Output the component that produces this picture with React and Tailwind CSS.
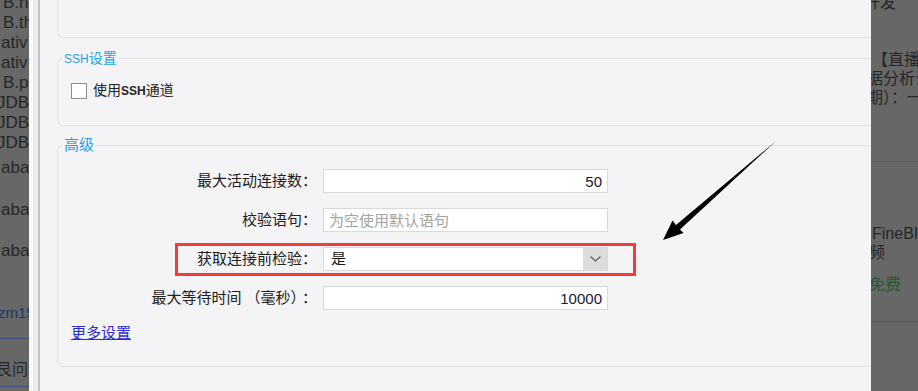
/* eslint-disable */
import React from "react";

const leftLines = [
    { t: "B.ne", cls: "-mt-[7px] ml-[3px]" },
    { t: "B.th", cls: "ml-[3px]" },
    { t: "ativ", cls: "ml-[1px]" },
    { t: "ativ", cls: "ml-[1px]" },
    { t: "B.pr", cls: "ml-[3px]" },
    { t: "JDBC", cls: "-ml-[3px]" },
    { t: "JDBC", cls: "-ml-[3px]" },
    { t: "JDBC", cls: "-ml-[3px]" },
    { t: "aba.c", cls: "mt-[5px] ml-[1px]" },
    { t: "aba.c", cls: "mt-[22px] ml-[1px]" },
    { t: "aba.c", cls: "mt-[21px] ml-[1px]" },
];

function LeftStrip() {
    return (
        <div className="w-[29px] shrink-0 bg-[#676767] text-[#262626] text-[17px] leading-[20px] whitespace-nowrap overflow-hidden">
            {leftLines.map((l, i) => (
                <div key={i} className={l.cls}>
                    {l.t}
                </div>
            ))}
            <div className="mt-[42px] -ml-[2px] text-[15px] text-[#1d3566]">zm15</div>
            <div className="mt-[15px] border-t border-[#33507c]" />
            <div className="mt-[21px] -ml-[4px] text-[16px]">艮问卷</div>
            <div className="mt-[6px] border-t border-[#33507c]" />
        </div>
    );
}

function RightStrip() {
    return (
        <div className="w-[47px] shrink-0 bg-[#676767] text-[#262626] text-[16px] leading-[19px] whitespace-nowrap overflow-hidden">
            <div className="-mt-[7px] -ml-[7px]">开发</div>
            <div className="mt-[38px] ml-[1px]">【直播推</div>
            <div className="-ml-[4px]">据分析公</div>
            <div className="-ml-[4px]">期）：一</div>
            <div className="mt-[54px] border-t border-[#5c5c5c]" />
            <div className="mt-[62px] ml-[1px]">FineBI V</div>
            <div className="-ml-[2px]">频</div>
            <div className="mt-[13px] -ml-[2px] text-[#1f5a2a]">免费</div>
            <div className="mt-[27px] border-t border-[#5a5a5a]" />
        </div>
    );
}

function Field({ label, children }) {
    return (
        <>
            <div className="text-right text-[15px] leading-[24px] text-[#222]">{label}</div>
            {children}
        </>
    );
}

const inputCls =
    "h-[24px] w-full border border-[#d9d9dc] bg-white px-[5px] text-[15px] leading-[22px] text-[#181838] outline-none";

function Panel() {
    return (
        <div className="w-[831px] shrink-0 overflow-hidden bg-[#f4f4f7] pl-[17px]">
            <div className="h-[38px] -mr-[20px] border border-t-0 border-[#e1e1e6] rounded-b-[6px]" />

            <fieldset className="mt-[11px] -mr-[20px] border border-[#e1e1e6] rounded-[6px] pl-[4px]">
                <legend className="px-[2px] text-[14px] leading-[18px] text-[#2aa0e6]">
                    <span className="text-[12px]">SSH</span>设置
                </legend>
                <div className="pl-[9px] pt-[14px] pb-[26px] flex items-center gap-[6px]">
                    <div className="w-[16px] h-[16px] border border-[#8e8e8e] bg-white" />
                    <span className="text-[14px] leading-[16px] text-[#222]">
                        使用<span className="text-[12px] font-bold">SSH</span>通道
                    </span>
                </div>
            </fieldset>

            <fieldset className="mt-[10px] -mr-[20px] border border-[#e1e1e6] rounded-[6px] pl-[4px]">
                <legend className="px-[2px] text-[15px] leading-[18px] text-[#2aa0e6]">高级</legend>
                <div className="pl-[9px] pt-[15px] pb-[23px]">
                    <div className="grid grid-cols-[246px_285px] gap-x-[6px] gap-y-[15px] items-center">
                        <Field label="最大活动连接数：">
                            <input readOnly value="50" className={inputCls + " text-right"} />
                        </Field>
                        <Field label="校验语句：">
                            <input
                                readOnly
                                placeholder="为空使用默认语句"
                                className={inputCls + " placeholder:text-[#a3a3a3]"}
                            />
                        </Field>
                        <Field label="获取连接前检验：">
                            <div className="h-[24px] flex items-stretch border border-[#d9d9dc] bg-white">
                                <span className="pl-[7px] text-[15px] leading-[22px] text-[#181818]">是</span>
                                <div className="ml-auto w-[24px] bg-[#dcdcdc] flex items-center justify-center">
                                    <svg width="11" height="6" viewBox="0 0 11 6">
                                        <polyline
                                            points="0.5,0.5 5.5,5 10.5,0.5"
                                            fill="none"
                                            stroke="#5a5a5a"
                                            strokeWidth="1.2"
                                        />
                                    </svg>
                                </div>
                            </div>
                        </Field>
                        <Field
                            label={
                                <>
                                    最大等待时间<span className="mx-[4px]">（毫秒）</span>：
                                </>
                            }
                        >
                            <input readOnly value="10000" className={inputCls + " text-right"} />
                        </Field>
                    </div>
                    <a className="mt-[13px] block w-fit text-[15px] leading-[20px] text-[#2b2bdb] underline">
                        更多设置
                    </a>
                </div>
            </fieldset>

            <div className="mt-[24px] -ml-[17px] border-t border-[#e1e1e6]" />
        </div>
    );
}

export default function App() {
    return (
        <div className="relative w-[918px] h-[391px] flex overflow-hidden bg-[#f4f4f7] font-['Liberation_Sans','Noto_Sans_CJK_SC',sans-serif]">
            <LeftStrip />
            <div className="w-[11px] shrink-0 flex">
                <div className="w-[4px] bg-[#f8f8f8]" />
                <div className="w-[5px] bg-[#ececec]" />
                <div className="w-[2px] bg-[#c2c2c2]" />
            </div>
            <Panel />
            <RightStrip />

            {/* annotation overlays */}
            <div className="absolute left-[175px] top-[243px] w-[461px] h-[33px] border-[3px] border-[#f23b3b]" />
            <svg className="absolute left-0 top-0 pointer-events-none" width="918" height="391">
                <polygon
                    points="776,141 680,229.5 683.5,233 663,240 672.5,220.5 676,225"
                    fill="#000"
                />
            </svg>
        </div>
    );
}
